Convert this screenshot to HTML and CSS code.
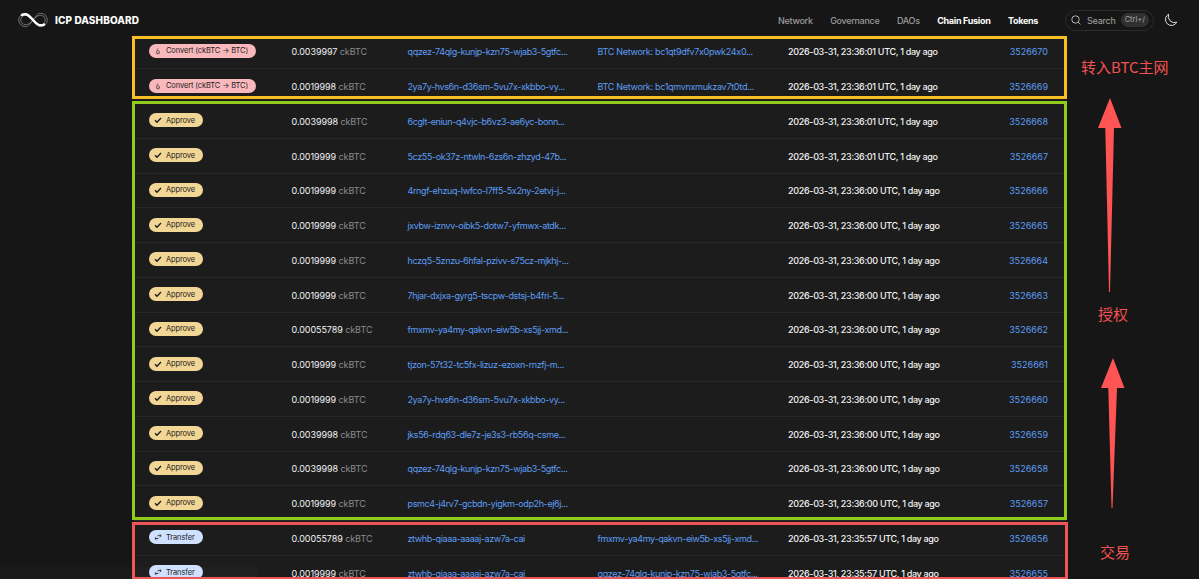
FILE: index.html
```html
<!DOCTYPE html>
<html lang="en">

<head>
    <meta charset="UTF-8">
    <title>ICP Dashboard</title>
    <link rel="stylesheet" href="styles.css">
</head>

<body>
<header class="header">
    <div class="brand">
        <svg class="logo" viewBox="0 0 30 16">
            <g fill="none" stroke="#aaa" stroke-width="0.6">
                <path d="M15 8C12 4 10.500 1.300 7.400 1.300A6.700 6.700 0 0 0 7.400 14.700C10.500 14.700 12 12 15 8S19.500 1.300 22.600 1.300A6.700 6.700 0 0 1 22.600 14.700C19.500 14.700 18 12 15 8Z"/>
                <path d="M15 8C12 5 10.500 3.300 7.500 3.300A4.700 4.700 0 0 0 7.500 12.700C10.500 12.700 12 11 15 8S19.500 3.300 22.500 3.300A4.700 4.700 0 0 1 22.500 12.700C19.500 12.700 18 11 15 8Z"/>
            </g>
            <path d="M4 3C9 .8 11.500 4 15 8S21 14.500 26 12.600" fill="none" stroke="#fff" stroke-width="2.500" stroke-linecap="round"/>
        </svg>
        <span class="brand-name">ICP DASHBOARD</span>
    </div>
    <nav class="nav">
        <a>Network</a>
        <a>Governance</a>
        <a>DAOs</a>
        <a class="active">Chain Fusion</a>
        <a class="active">Tokens</a>
    </nav>
    <div class="search">
        <svg class="search-icon" viewBox="0 0 10 10"><circle cx="4.500" cy="4.500" r="3.700"/><path d="M7.200 7.200L9.400 9.400"/></svg>
        <span>Search</span>
        <kbd>Ctrl+/</kbd>
    </div>
    <svg class="moon" viewBox="0 0 14 14"><path d="M4.600 1.200A6 6 0 1 0 12.800 9.200A6.300 6.300 0 0 1 4.600 1.200Z"/></svg>
</header>

<main class="transactions" id="transactions"></main>

<div class="status-bar"></div>

<!-- 标注 -->
<div class="mark mark-convert"></div>
<div class="mark mark-approve"></div>
<div class="mark mark-transfer"></div>
<div class="note note-convert">转入BTC主网</div>
<div class="note note-approve">授权</div>
<div class="note note-transfer">交易</div>
<svg class="arrow arrow-top" viewBox="0 0 24 195"><path d="M12 0L23.500 30H16L12 194H11L7.300 30H0Z"/></svg>
<svg class="arrow arrow-bottom" viewBox="0 0 24 150"><path d="M12 0L23.500 30H16L11.500 150H10.500L7.300 30H0Z"/></svg>

<script src="script.js"></script>
</body>

</html>
```

FILE: styles.css
```css
body {
    position: relative;
    height: 579px;
    margin: 0;
    overflow: hidden;
    background-color: #161616;
    color: #f2f2f2;
    font-family: Inter, "Liberation Sans", "Noto Sans CJK SC", sans-serif;
    font-size: 9px;
    font-feature-settings: "calt" 0;
}

.header {
    box-sizing: border-box;
    display: flex;
    align-items: center;
    height: 34.5px;
    padding: 6px 21px 0 18px;
}

.brand {
    display: flex;
    align-items: center;
    gap: 7px;
}

.logo {
    width: 30px;
    height: 16px;
}

.brand-name {
    color: #fff;
    font-size: 10px;
    font-weight: 800;
    letter-spacing: 0.1px;
}

.nav {
    display: flex;
    gap: 17.5px;
    margin-left: auto;
    color: #9a9a9a;
    font-weight: 500;
    letter-spacing: -0.3px;
}

.nav .active {
    color: #fff;
    font-weight: 700;
}

.search {
    box-sizing: border-box;
    display: flex;
    align-items: center;
    width: 89px;
    height: 21px;
    margin-left: 27px;
    padding: 0 4px 0 5px;
    border: 1px solid #2c2c2c;
    border-radius: 11px;
    color: #a5a5a5;
    letter-spacing: -0.2px;
}

.search-icon {
    width: 10px;
    height: 10px;
    margin-right: 6px;
    fill: none;
    stroke: #b5b5b5;
}

.search kbd {
    margin-left: auto;
    padding: 2px 4px;
    border-radius: 7px;
    background-color: #303030;
    font-family: inherit;
    font-size: 7.5px;
    line-height: 10px;
    letter-spacing: 0;
}

.moon {
    width: 14px;
    height: 14px;
    margin-left: 10px;
    fill: none;
    stroke: #ddd;
    stroke-linejoin: round;
}

.transactions {
    width: 932px;
    margin-left: 134px;
    background-color: #1c1c1c;
}

.row {
    box-sizing: border-box;
    display: grid;
    grid-template-columns: 142.5px 116px 190px 190.5px 200px 1fr;
    align-items: center;
    height: 34.75px;
    padding: 1px 18px 0 15px;
    border-bottom: 1px solid #282828;
    white-space: nowrap;
}

.badge {
    display: inline-flex;
    align-items: center;
    height: 14px;
    margin-bottom: 2px;
    padding: 0 8px 0 5px;
    border-radius: 7px;
    color: #1c1c1c;
    font-size: 7.5px;
    letter-spacing: -0.12px;
    vertical-align: middle;
}

.badge svg {
    width: 8px;
    height: 8px;
    margin-right: 4px;
    fill: none;
    stroke: #1c1c1c;
}

.convert {
    background-color: #f9b8bc;
}

.approve {
    background-color: #f2d696;
}

.transfer {
    background-color: #cfe1ff;
}

.amount {
    letter-spacing: -0.07px;
}

.unit {
    color: #8c8c8c;
}

.link {
    color: #5c9df5;
}

.account {
    letter-spacing: -0.38px;
}

.account.network {
    letter-spacing: -0.3px;
}

.time {
    font-weight: 500;
    letter-spacing: -0.32px;
}

.index {
    text-align: right;
}

.status-bar {
    position: absolute;
    bottom: 0;
    left: 0;
    width: 257px;
    height: 12px;
    background-color: rgba(255, 255, 255, 0.02);
}

.mark {
    box-sizing: border-box;
    position: absolute;
    left: 132px;
    width: 935px;
    border: 3px solid;
}

.mark-convert {
    top: 36px;
    height: 63px;
    border-color: #f6bf26;
}

.mark-approve {
    top: 101px;
    height: 419px;
    border-color: #8fcc1c;
}

.mark-transfer {
    top: 522px;
    width: 936px;
    height: 58px;
    border-color: #ee5658;
}

.note {
    position: absolute;
    color: #f25252;
    font-family: "Noto Sans CJK SC", sans-serif;
    font-size: 15px;
    font-weight: 400;
    line-height: 20px;
    white-space: nowrap;
}

.note-convert {
    top: 57px;
    left: 1081px;
}

.note-approve {
    top: 304px;
    left: 1098px;
}

.note-transfer {
    top: 542px;
    left: 1100px;
}

.arrow {
    position: absolute;
    width: 24px;
    fill: #ff5454;
}

.arrow-top {
    top: 98px;
    left: 1097.5px;
    height: 195px;
}

.arrow-bottom {
    top: 358px;
    left: 1101px;
    height: 150px;
}
```

FILE: script.js
```js
const types = {
    convert: {
        label: 'Convert (ckBTC → BTC)',
        icon: '<path d="M4 1.5C3 2.5 2.700 3 3.500 3.500M3.700 3.500C2 4 2 7 4 7S6 4 4.300 3.500M4 5V5.500" stroke-width=".7"/>'
    },
    approve: {
        label: 'Approve',
        icon: '<path d="M1 4.300L3 6.300L7 2" stroke-width="1.300"/>'
    },
    transfer: {
        label: 'Transfer',
        icon: '<path d="M3.500 2.700H7M5.700 1.300L7.200 2.700L5.700 4M4.500 5.500H1M2.300 4.200L.9 5.500L2.300 6.900" stroke-width=".8"/>'
    }
};

// 类型, 数量, 发送方, 接收方, 时间
const transactions = [
    ['convert', '0.0039997', 'qqzez-74qlg-kunjp-kzn75-wjab3-5gtfc...', 'BTC Network: bc1qt9dfv7x0pwk24x0...', '23:36:01'],
    ['convert', '0.0019998', '2ya7y-hvs6n-d36sm-5vu7x-xkbbo-vy...', 'BTC Network: bc1qmvnxmukzav7t0td...', '23:36:01'],
    ['approve', '0.0039998', '6cglt-eniun-q4vjc-b6vz3-ae6yc-bonn...', '', '23:36:01'],
    ['approve', '0.0019999', '5cz55-ok37z-ntwln-6zs6n-zhzyd-47b...', '', '23:36:01'],
    ['approve', '0.0019999', '4rngf-ehzuq-lwfco-l7ff5-5x2ny-2etvj-j...', '', '23:36:00'],
    ['approve', '0.0019999', 'jxvbw-iznvv-oibk5-dotw7-yfmwx-atdk...', '', '23:36:00'],
    ['approve', '0.0019999', 'hczq5-5znzu-6hfal-pzivv-s75cz-mjkhj-...', '', '23:36:00'],
    ['approve', '0.0019999', '7hjar-dxjxa-gyrg5-tscpw-dstsj-b4fri-5...', '', '23:36:00'],
    ['approve', '0.00055789', 'fmxmv-ya4my-qakvn-eiw5b-xs5jj-xmd...', '', '23:36:00'],
    ['approve', '0.0019999', 'tjzon-57t32-tc5fx-lizuz-ezoxn-rnzfj-m...', '', '23:36:00'],
    ['approve', '0.0019999', '2ya7y-hvs6n-d36sm-5vu7x-xkbbo-vy...', '', '23:36:00'],
    ['approve', '0.0039998', 'jks56-rdq63-dle7z-je3s3-rb56q-csme...', '', '23:36:00'],
    ['approve', '0.0039998', 'qqzez-74qlg-kunjp-kzn75-wjab3-5gtfc...', '', '23:36:00'],
    ['approve', '0.0019999', 'psmc4-j4rv7-gcbdn-yigkm-odp2h-ej6j...', '', '23:36:00'],
    ['transfer', '0.00055789', 'ztwhb-qiaaa-aaaaj-azw7a-cai', 'fmxmv-ya4my-qakvn-eiw5b-xs5jj-xmd...', '23:35:57'],
    ['transfer', '0.0019999', 'ztwhb-qiaaa-aaaaj-azw7a-cai', 'qqzez-74qlg-kunjp-kzn75-wjab3-5gtfc...', '23:35:57']
];

const list = document.getElementById('transactions');
transactions.forEach(([type, amount, from, to, time], i) => {
    const network = type === 'convert' ? 'network' : '';
    list.insertAdjacentHTML('beforeend', `
        <div class="row">
            <div><span class="badge ${type}"><svg viewBox="0 0 8 8">${types[type].icon}</svg>${types[type].label}</span></div>
            <div class="amount">${amount} <span class="unit">ckBTC</span></div>
            <div class="account link">${from}</div>
            <div class="account link ${network}">${to}</div>
            <div class="time">2026-03-31, ${time} UTC, 1 day ago</div>
            <div class="index link">${3526670 - i}</div>
        </div>
    `);
});
```
